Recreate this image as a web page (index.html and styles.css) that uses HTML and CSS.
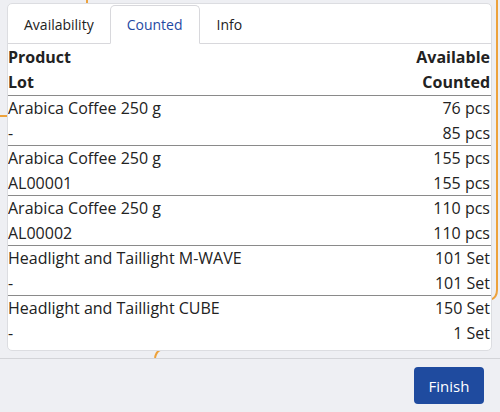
FILE: index.html
```html
<!DOCTYPE html>
<html>
<head>
<meta charset="utf-8">
<link rel="stylesheet" href="styles.css">
</head>
<body>
<svg class="backdrop" width="500" height="412" viewBox="0 0 500 412">
  <path d="M87 0 V4" stroke="#eda23c" stroke-width="2" fill="none"/>
  <path d="M0 116 H8" stroke="#eda23c" stroke-width="2" fill="none"/>
  <path d="M497 0 V290 Q497 298 490 300" stroke="#eda23c" stroke-width="2" fill="none"/>
  <path d="M155 358 Q156 352 160 350" stroke="#eda23c" stroke-width="2" fill="none"/>
</svg>
<div class="page">
  <div class="dialog">
    <div class="tabs">
      <div class="tab">Availability</div>
      <div class="tab active">Counted</div>
      <div class="tab info">Info</div>
      <div class="tab-fill"></div>
    </div>
    <div class="table">
      <div class="row head">
        <div class="cell"><span>Product</span><span>Lot</span></div>
        <div class="cell num"><span>Available</span><span>Counted</span></div>
      </div>
      <div class="row">
        <div class="cell"><span>Arabica Coffee 250 g</span><span>-</span></div>
        <div class="cell num"><span>76 pcs</span><span>85 pcs</span></div>
      </div>
      <div class="row">
        <div class="cell"><span>Arabica Coffee 250 g</span><span>AL00001</span></div>
        <div class="cell num"><span>155 pcs</span><span>155 pcs</span></div>
      </div>
      <div class="row">
        <div class="cell"><span>Arabica Coffee 250 g</span><span>AL00002</span></div>
        <div class="cell num"><span>110 pcs</span><span>110 pcs</span></div>
      </div>
      <div class="row">
        <div class="cell"><span>Headlight and Taillight M-WAVE</span><span>-</span></div>
        <div class="cell num"><span>101 Set</span><span>101 Set</span></div>
      </div>
      <div class="row last">
        <div class="cell"><span>Headlight and Taillight CUBE</span><span>-</span></div>
        <div class="cell num"><span>150 Set</span><span>1 Set</span></div>
      </div>
    </div>
  </div>
  <div class="footer">
    <button class="finish">Finish</button>
  </div>
</div>
</body>
</html>
```
FILE: styles.css
```css
html, body {
  margin: 0;
  padding: 0;
  background: #eeeff3;
  font-family: "Open Sans", "Noto Sans", sans-serif;
  color: #222;
}
.backdrop {
  position: absolute;
  left: 0;
  top: 0;
  z-index: 0;
}
.page {
  position: relative;
  z-index: 1;
  width: 500px;
  height: 412px;
  display: flex;
  flex-direction: column;
}
.dialog {
  margin: 3px 8px 0 7px;
  height: 348px;
  background: #fff;
  border: 1px solid #dcdde1;
  border-radius: 5px;
  box-sizing: border-box;
  overflow: hidden;
}
.tabs {
  display: flex;
  height: 40px;
  align-items: flex-end;
}
.tab {
  padding: 0 16px;
  display: flex;
  align-items: center;
  font-size: 14px;
  color: #222;
  border-bottom: 1px solid #d8d8dc;
  box-sizing: border-box;
  height: 39px;
}
.tab.active {
  color: #1f4aa3;
  border: 1px solid #d8d8dc;
  border-bottom: 1px solid #fff;
  border-radius: 5px 5px 0 0;
  padding: 0 16px;
}
.tab.info {
  padding-left: 17px;
}
.tab-fill {
  flex: 1;
  height: 39px;
  border-bottom: 1px solid #d8d8dc;
  box-sizing: border-box;
}
.table {
  display: flex;
  flex-direction: column;
}
.row {
  display: flex;
  justify-content: space-between;
  border-bottom: 1px solid #8a8a8a;
  height: 50px;
  box-sizing: border-box;
  padding: 0 1px 0 0;
}
.row.head {
  height: 52px;
  font-weight: 700;
  padding-top: 1px;
}
.row.last {
  border-bottom: none;
}
.cell {
  display: flex;
  flex-direction: column;
  font-size: 16px;
  line-height: 25px;
}
.row:not(.head) .cell {
  line-height: 24.5px;
}
.cell.num {
  text-align: right;
  align-items: flex-end;
}
.footer {
  margin-top: 7px;
  border-top: 1px solid #d3d4d8;
  display: flex;
  justify-content: flex-end;
  padding: 8px 16px 0 0;
}
.finish {
  width: 70px;
  height: 37px;
  background: #1f4b9f;
  color: #fff;
  border: none;
  border-radius: 4px;
  font-family: "Open Sans", "Noto Sans", sans-serif;
  font-size: 15px;
  padding: 0;
}
```
